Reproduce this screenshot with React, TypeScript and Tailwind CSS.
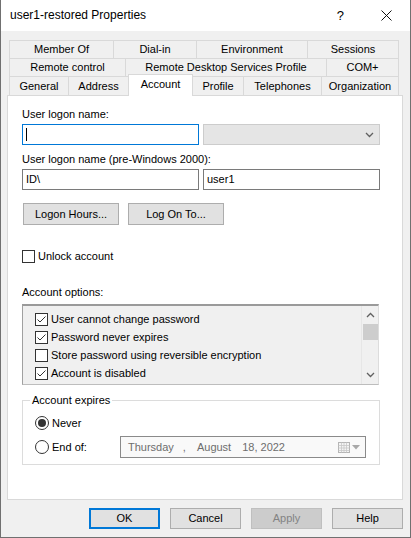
import React from "react";

const Chevron = ({ up = false }: { up?: boolean }) => (
  <svg width="9" height="6" viewBox="0 0 9 6" className="block">
    <path
      d={up ? "M1 5 L4.5 1.5 L8 5" : "M1 1 L4.5 4.5 L8 1"}
      fill="none"
      stroke="#606060"
      strokeWidth="1.3"
    />
  </svg>
);

const Check = ({ checked }: { checked: boolean }) => (
  <div className="w-[13px] h-[13px] border border-[#333333] bg-white flex items-center justify-center shrink-0">
    {checked && (
      <svg width="11" height="11" viewBox="0 0 11 11">
        <path d="M1.5 5.5 L4 8 L9.5 2.5" fill="none" stroke="#333333" strokeWidth="1" />
      </svg>
    )}
  </div>
);

const Radio = ({ checked }: { checked: boolean }) => (
  <div className="w-[14px] h-[14px] rounded-full border border-[#333333] bg-white flex items-center justify-center shrink-0">
    {checked && <div className="w-[8px] h-[8px] rounded-full bg-[#333333]" />}
  </div>
);

const row1 = [
  { label: "Member Of", w: "w-[104px] border-r" },
  { label: "Dial-in", w: "w-[83px] border-r" },
  { label: "Environment", w: "w-[111px] border-r" },
  { label: "Sessions", w: "flex-1" },
];
const row2 = [
  { label: "Remote control", w: "w-[116px] border-r" },
  { label: "Remote Desktop Services Profile", w: "w-[201px] border-r" },
  { label: "COM+", w: "flex-1" },
];

const options = [
  { label: "User cannot change password", checked: true },
  { label: "Password never expires", checked: true },
  { label: "Store password using reversible encryption", checked: false },
  { label: "Account is disabled", checked: true },
];

export default function App() {
  return (
    <div className="w-[411px] h-[538px] flex flex-col bg-[#f0f0f0] border-x border-b border-[#707070] font-['Liberation_Sans',Arial,sans-serif] text-[11px] leading-[13px] text-black overflow-hidden">
      {/* Title bar */}
      <div className="h-[31px] bg-white flex items-center pl-[9px] pr-[18px] shrink-0">
        <span className="text-[12px]">user1-restored Properties</span>
        <span className="ml-auto text-[13px] mr-[37px]">?</span>
        <svg width="11" height="11" viewBox="0 0 11 11">
          <path d="M0.5 0.5 L10.5 10.5 M10.5 0.5 L0.5 10.5" stroke="#111" strokeWidth="1" />
        </svg>
      </div>

      <div className="flex flex-col pl-[6px] pr-[7px] pt-[9px]">
        {/* Tabs */}
        <div className="ml-[2px] w-[390px] flex flex-col">
          <div className="h-[18px] flex border-t border-x border-[#d9d9d9]">
            {row1.map((t) => (
              <div key={t.label} className={`${t.w} border-[#d9d9d9] flex items-center justify-center`}>
                {t.label}
              </div>
            ))}
          </div>
          <div className="h-[18px] flex border-t border-x border-[#d9d9d9]">
            {row2.map((t) => (
              <div key={t.label} className={`${t.w} border-[#d9d9d9] flex items-center justify-center`}>
                {t.label}
              </div>
            ))}
          </div>
          <div className="h-[19px] flex items-end">
            <div className="w-[59px] h-[19px] border-t border-l border-[#d9d9d9] flex items-center justify-center">General</div>
            <div className="w-[60px] h-[19px] border-t border-l border-[#d9d9d9] flex items-center justify-center">Address</div>
            <div className="w-[65px] h-[22px] -mb-px relative z-10 bg-white border-t border-x border-[#d9d9d9] flex items-center justify-center pb-[3px]">Account</div>
            <div className="w-[50px] h-[19px] border-t border-[#d9d9d9] flex items-center justify-center">Profile</div>
            <div className="w-[78px] h-[19px] border-t border-l border-[#d9d9d9] flex items-center justify-center">Telephones</div>
            <div className="flex-1 h-[19px] border-t border-x border-[#d9d9d9] flex items-center justify-center">Organization</div>
          </div>
        </div>

        {/* Panel */}
        <div className="w-[396px] h-[405px] bg-white border border-[#d9d9d9] px-[14px] flex flex-col">
          <div className="mt-[12px] h-[14px]">User logon name:</div>
          <div className="mt-[2px] flex gap-[4px]">
            <div className="w-[177px] h-[21px] border border-[#0078d7] bg-white flex items-center pl-[3px]">
              <div className="w-px h-[13px] bg-black" />
            </div>
            <div className="w-[177px] h-[21px] border border-[#cccccc] bg-[#e5e5e5] flex items-center justify-end pr-[5px]">
              <Chevron />
            </div>
          </div>

          <div className="mt-[8px] h-[14px]">User logon name (pre-Windows 2000):</div>
          <div className="mt-[2px] flex gap-[4px]">
            <div className="w-[177px] h-[21px] border border-[#7a7a7a] bg-white flex items-center pl-[3px]">ID\</div>
            <div className="w-[177px] h-[21px] border border-[#7a7a7a] bg-white flex items-center pl-[3px]">user1</div>
          </div>

          <div className="mt-[13px] flex gap-[9px] pl-px">
            <div className="w-[96px] h-[22px] border border-[#adadad] bg-[#e1e1e1] flex items-center justify-center">Logon Hours...</div>
            <div className="w-[96px] h-[22px] border border-[#adadad] bg-[#e1e1e1] flex items-center justify-center">Log On To...</div>
          </div>

          <div className="mt-[24px] h-[14px] flex items-center gap-[3px]">
            <Check checked={false} />
            <span>Unlock account</span>
          </div>

          <div className="mt-[23px] h-[14px]">Account options:</div>

          <div className="mt-[4px] w-[357px] h-[81px] border-t-2 border-l border-t-[#9a9a9a] border-l-[#a0a0a0] border-r border-b border-r-[#dcdcdc] border-b-[#bdbdbd] bg-[#f0f0f0] flex">
            <div className="flex-1 flex flex-col pt-[4px] pl-[12px]">
              {options.map((o) => (
                <div key={o.label} className="h-[18px] flex items-center gap-[3px]">
                  <Check checked={o.checked} />
                  <span>{o.label}</span>
                </div>
              ))}
            </div>
            <div className="w-[17px] flex flex-col items-center border-l border-[#e6e6e6]">
              <div className="h-[18px] flex items-center justify-center">
                <Chevron up />
              </div>
              <div className="w-[15px] h-[16px] bg-[#cdcdcd]" />
              <div className="flex-1" />
              <div className="h-[18px] flex items-center justify-center">
                <Chevron />
              </div>
            </div>
          </div>

          <div className="mt-[15px] w-[358px] h-[65px] border border-[#dcdcdc] relative flex flex-col pl-[12px]">
            <div className="absolute -top-[8px] left-[7px] bg-white px-[2px] leading-[14px]">Account expires</div>
            <div className="mt-[15px] h-[14px] flex items-center gap-[3px]">
              <Radio checked />
              <span>Never</span>
            </div>
            <div className="mt-[6px] flex items-center">
              <div className="w-[85px] flex items-center gap-[3px]">
                <Radio checked={false} />
                <span>End of:</span>
              </div>
              <div className="w-[246px] h-[22px] border border-[#8a8a8a] bg-[#f9f9f9] flex items-center pl-[7px] pr-[5px] text-[#6d6d6d]">
                <span>Thursday</span>
                <span className="ml-[9px]">,</span>
                <span className="ml-[11px]">August</span>
                <span className="ml-[11px]">18, 2022</span>
                <div className="ml-auto flex items-center gap-[2px]">
                  <svg width="12" height="11" viewBox="0 0 12 11">
                    <rect x="0.5" y="0.5" width="11" height="10" fill="#f4f4f4" stroke="#b5b5b5" />
                    <path d="M0.5 3.5 H11.5 M0.5 6 H11.5 M0.5 8.5 H11.5 M3.5 0.5 V10.5 M6 0.5 V10.5 M8.5 0.5 V10.5" stroke="#c8c8c8" strokeWidth="0.8" />
                  </svg>
                  <svg width="8" height="5" viewBox="0 0 8 5">
                    <path d="M0 0 H8 L4 4.5 Z" fill="#a8a8a8" />
                  </svg>
                </div>
              </div>
            </div>
          </div>
        </div>

        {/* Bottom buttons */}
        <div className="mt-[8px] flex justify-end gap-[10px]">
          <div className="w-[71px] h-[21px] border-2 border-[#0078d7] bg-[#e1e1e1] flex items-center justify-center">OK</div>
          <div className="w-[71px] h-[21px] border border-[#adadad] bg-[#e1e1e1] flex items-center justify-center">Cancel</div>
          <div className="w-[71px] h-[21px] border border-[#bfbfbf] bg-[#cccccc] text-[#838383] flex items-center justify-center">Apply</div>
          <div className="w-[71px] h-[21px] border border-[#adadad] bg-[#e1e1e1] flex items-center justify-center">Help</div>
        </div>
      </div>
    </div>
  );
}
